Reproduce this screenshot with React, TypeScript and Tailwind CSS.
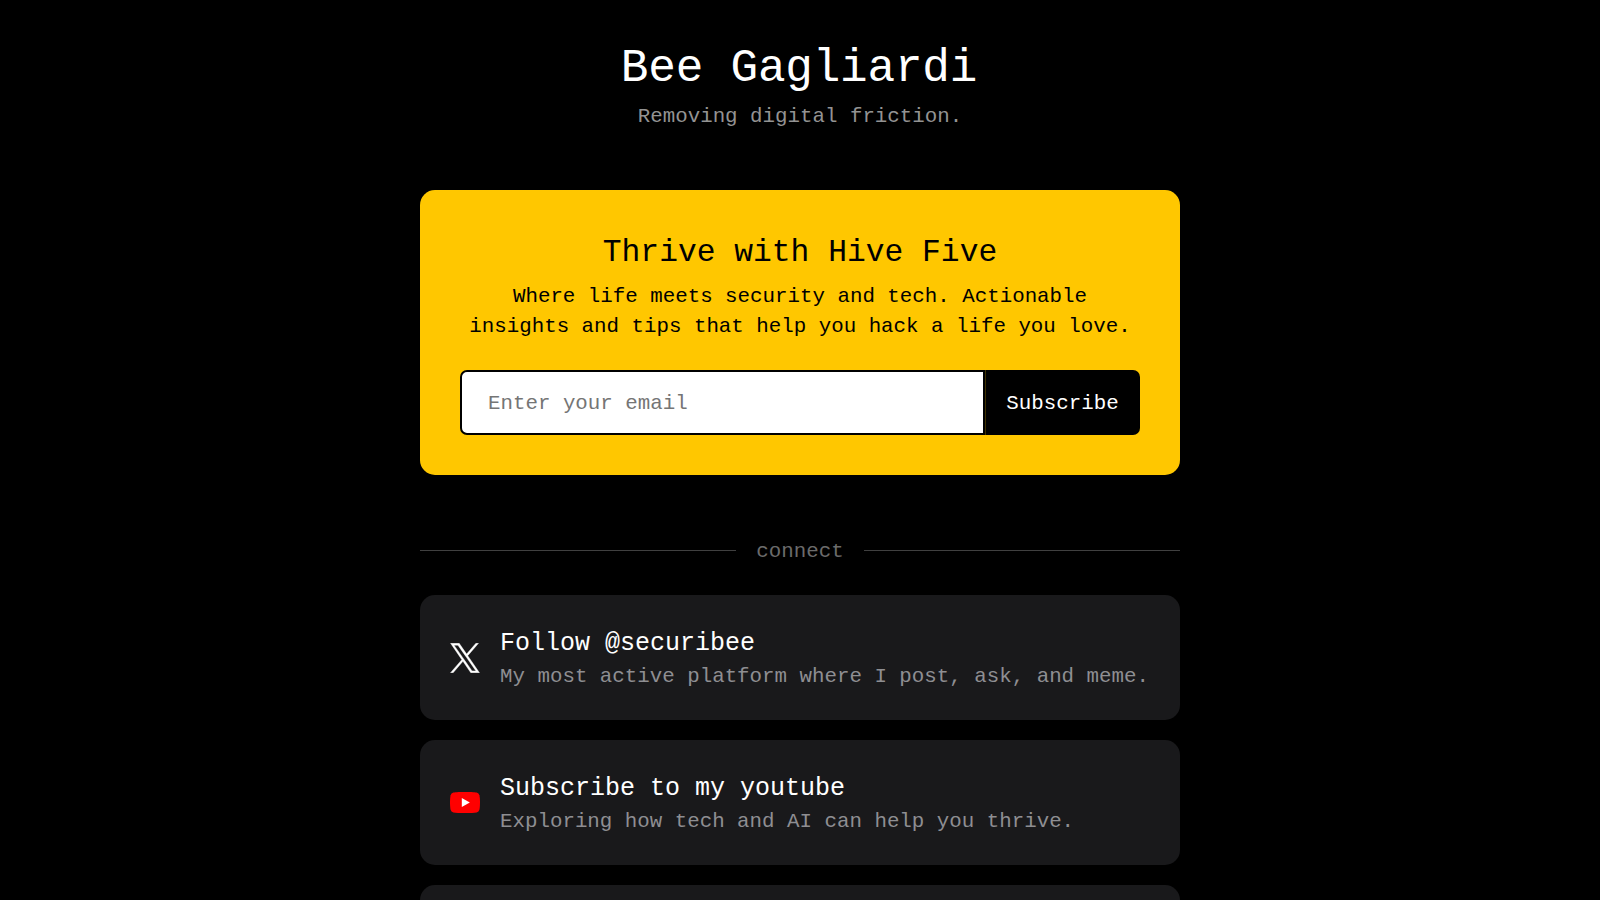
import type { ReactNode } from 'react';

function XLogo() {
  return (
    <svg className="h-[30px] w-[30px]" viewBox="-20 -10 1240 1247" fill="#fff" stroke="#fff" strokeWidth="18" aria-hidden="true">
      <path d="M714.163 519.284L1160.89 0H1055.03L667.137 450.887L357.328 0H0L468.492 681.821L0 1226.37H105.866L515.491 750.218L842.672 1226.37H1200L714.137 519.284H714.163ZM569.165 687.828L521.697 619.934L144.011 79.6944H306.615L611.412 515.685L658.88 583.579L1055.08 1150.3H892.476L569.165 687.854V687.828Z" />
    </svg>
  );
}

function YouTubeLogo() {
  return (
    <svg className="h-[21px] w-[30px]" viewBox="0 0 30 21" aria-hidden="true">
      <path
        d="M15 0C19 0 24.5.1 26.7.6A3.8 3.8 0 0 1 29.4 3.3C30.2 7 30.2 14 29.4 17.7A3.8 3.8 0 0 1 26.7 20.4C22.5 21.2 7.5 21.2 3.3 20.4A3.8 3.8 0 0 1 .6 17.7C-.2 14-.2 7 .6 3.3A3.8 3.8 0 0 1 3.3.6C5.5.1 11 0 15 0Z"
        fill="#f00"
      />
      <path d="M11.8 6L19.8 10.5L11.8 15Z" fill="#fff" />
    </svg>
  );
}

function LinkCard({ icon, title, text }: { icon: ReactNode; title: string; text: string }) {
  return (
    <a className="flex h-[125px] shrink-0 items-center rounded-[15px] bg-[#19191b] px-[30px]">
      <span className="flex w-[30px] justify-center">{icon}</span>
      <span className="ml-5 flex flex-col whitespace-nowrap pt-[3px]">
        <span className="text-[25px] leading-[35px] text-white">{title}</span>
        <span className="mt-px text-[20.8px] leading-[30px] text-[#8e8e92]">{text}</span>
      </span>
    </a>
  );
}

export default function App() {
  return (
    <div className="h-screen overflow-hidden bg-black font-['Liberation_Mono',monospace] text-[20.8px] leading-[30px]">
      <main className="mx-auto flex w-[760px] flex-col pt-11">
        <header className="text-center">
          <h1 className="pr-0.5 text-[46px] leading-[50px] tracking-[-0.2px] text-white">Bee Gagliardi</h1>
          <p className="mt-2 text-[#939393]">Removing digital friction.</p>
        </header>

        <section className="mt-[58px] h-[285px] rounded-[15px] bg-[#ffc700] px-10 pt-11 text-center text-black">
          <h2 className="text-[31.3px] leading-[38px]">Thrive with Hive Five</h2>
          <p className="mt-2.5 whitespace-nowrap">
            Where life meets security and tech. Actionable
            <br />
            insights and tips that help you hack a life you love.
          </p>
          <form className="mt-7 flex h-[65px]">
            <input
              type="email"
              placeholder="Enter your email"
              className="min-w-0 flex-1 rounded-l-[7px] border-2 border-black bg-white pt-0.5 pl-[26px] outline-none placeholder:text-[#757575]"
            />
            <button
              type="button"
              className="w-[155px] rounded-r-[7px] border-l border-[#3d3000] bg-black pt-0.5 pr-px text-white"
            >
              Subscribe
            </button>
          </form>
        </section>

        <div className="mt-[61px] flex h-[30px] items-center text-[#6b6b6b]">
          <span className="mb-px h-px flex-1 bg-[#404040]" />
          <span className="px-5 pt-0.5">connect</span>
          <span className="mb-px h-px flex-1 bg-[#404040]" />
        </div>

        <nav className="mt-[29px] flex flex-col gap-5">
          <LinkCard icon={<XLogo />} title="Follow @securibee" text="My most active platform where I post, ask, and meme." />
          <LinkCard icon={<YouTubeLogo />} title="Subscribe to my youtube" text="Exploring how tech and AI can help you thrive." />
          <div className="h-[125px] rounded-[15px] bg-[#19191b]" />
        </nav>
      </main>
    </div>
  );
}
